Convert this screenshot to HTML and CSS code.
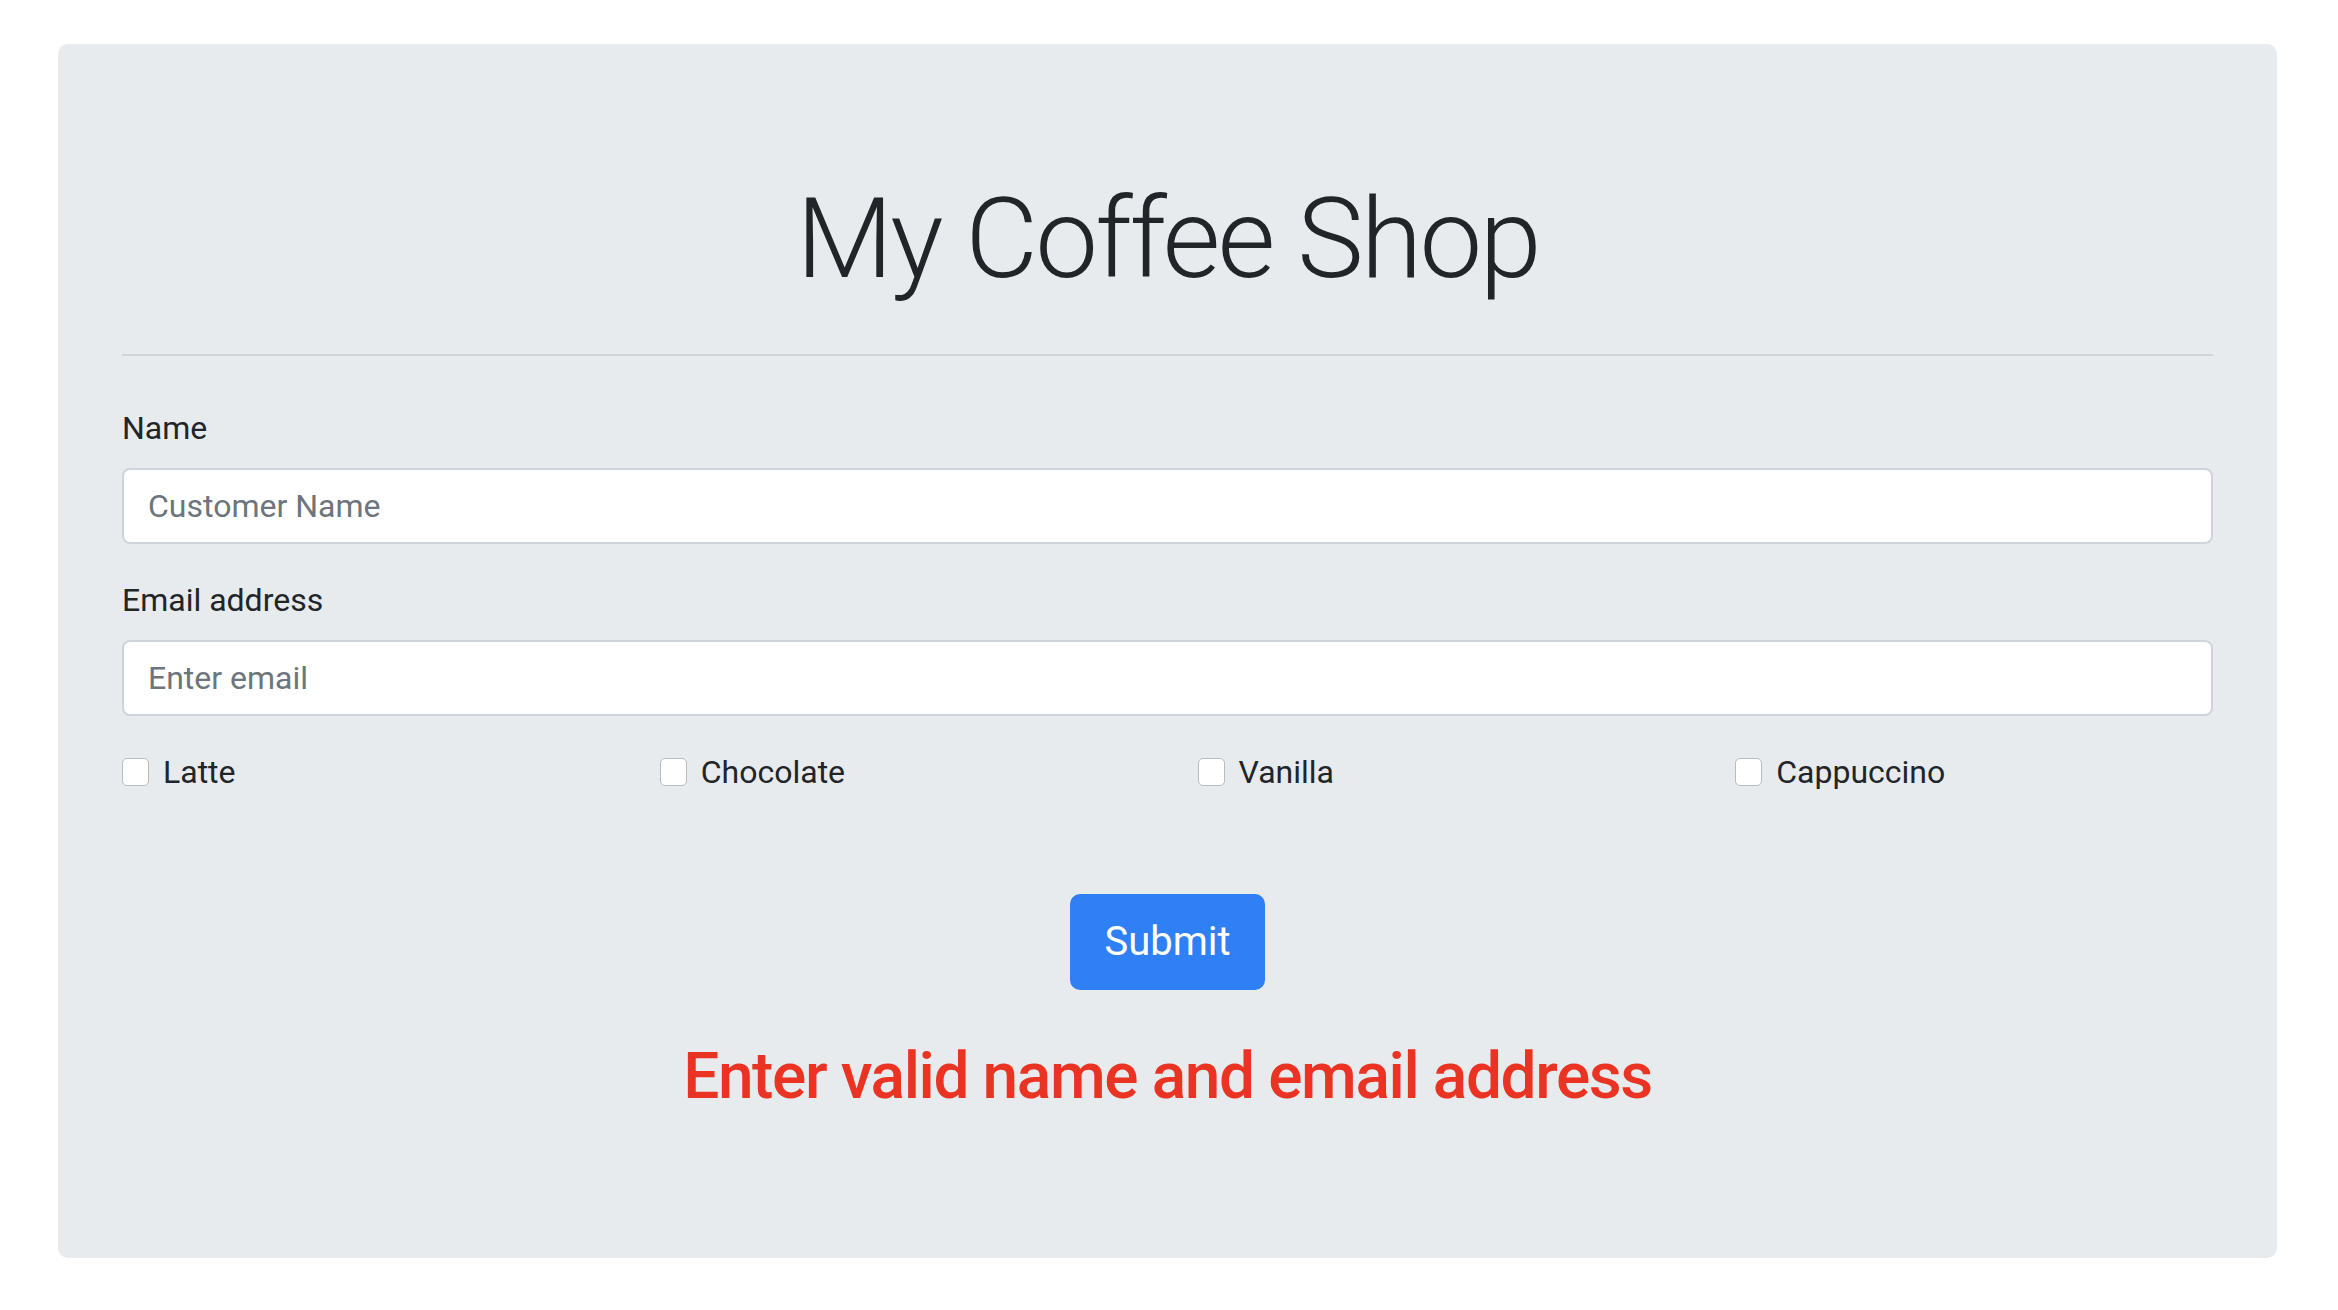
FILE: index.html
```html
<!DOCTYPE html>
<html lang="en">
<head>
<meta charset="utf-8">
<title>My Coffee Shop</title>
<link rel="stylesheet" href="styles.css">
</head>
<body>
<div class="page">
  <div class="jumbotron">
    <h1 class="title">My Coffee Shop</h1>
    <hr class="divider">
    <form class="order-form">
      <div class="form-group">
        <label class="field-label" for="name">Name</label>
        <input class="field-input" id="name" type="text" placeholder="Customer Name">
      </div>
      <div class="form-group">
        <label class="field-label" for="email">Email address</label>
        <input class="field-input" id="email" type="email" placeholder="Enter email">
      </div>
      <div class="check-row">
        <label class="check"><input type="checkbox" class="check-box"><span>Latte</span></label>
        <label class="check"><input type="checkbox" class="check-box"><span>Chocolate</span></label>
        <label class="check"><input type="checkbox" class="check-box"><span>Vanilla</span></label>
        <label class="check"><input type="checkbox" class="check-box"><span>Cappuccino</span></label>
      </div>
      <div class="actions">
        <button type="button" class="btn-submit">Submit</button>
      </div>
      <h2 class="error">Enter valid name and email address</h2>
    </form>
  </div>
</div>
</body>
</html>
```

FILE: styles.css
```css
html, body {
  margin: 0;
  padding: 0;
  background: #ffffff;
}
body {
  font-family: Roboto, "Noto Sans", "Liberation Sans", sans-serif;
  color: #212529;
  font-size: 32px;
  line-height: 1.5;
}
.page {
  padding: 44px 61px 54px 58px;
}
.jumbotron {
  background: #e8ebee;
  border-radius: 10px;
  padding: 128px 64px 126px 64px;
}
.title {
  margin: 0 0 16px 0;
  font-size: 112px;
  font-weight: 300;
  line-height: 1.2;
  text-align: center;
  color: #212529;
  letter-spacing: -2.8px;
}
.divider {
  margin: 48px 0 48px 0;
  border: 0;
  border-top: 2px solid #d2d5d8;
  height: 0;
}
.order-form {
  margin: 0;
}
.form-group {
  margin-bottom: 32px;
}
.field-label {
  display: block;
  margin-bottom: 16px;
  font-size: 32px;
  line-height: 48px;
  color: #212529;
}
.field-input {
  display: block;
  box-sizing: border-box;
  width: 100%;
  height: 76px;
  padding: 12px 24px;
  font-family: inherit;
  font-size: 32px;
  line-height: 48px;
  color: #495057;
  background: #ffffff;
  border: 2px solid #ced4da;
  border-radius: 8px;
  outline: none;
}
.field-input::placeholder {
  color: #6c757d;
  opacity: 1;
}
.check-row {
  display: grid;
  grid-template-columns: repeat(4, 1fr);
  column-gap: 60px;
  height: 48px;
  margin-top: 1px;
}
.check {
  display: flex;
  align-items: center;
  gap: 14px;
  font-size: 32px;
  line-height: 48px;
  color: #212529;
}
.check-box {
  appearance: none;
  -webkit-appearance: none;
  box-sizing: border-box;
  width: 27px;
  height: 28px;
  margin: 0;
  background: #ffffff;
  border: 1.5px solid #b9bcbf;
  border-radius: 5px;
  flex: none;
}
.actions {
  display: flex;
  justify-content: center;
  margin-top: 98px;
}
.btn-submit {
  font-family: inherit;
  font-size: 40px;
  line-height: 60px;
  font-weight: 400;
  color: #ffffff;
  background: #2f7ff5;
  border: 2px solid #2f7ff5;
  border-radius: 10px;
  padding: 16px 32px;
  cursor: pointer;
}
.error {
  margin: 49px 0 16px 0;
  font-size: 64px;
  font-weight: 500;
  line-height: 1.2;
  text-align: center;
  color: #ea3323;
  letter-spacing: -1.4px;
}
```
